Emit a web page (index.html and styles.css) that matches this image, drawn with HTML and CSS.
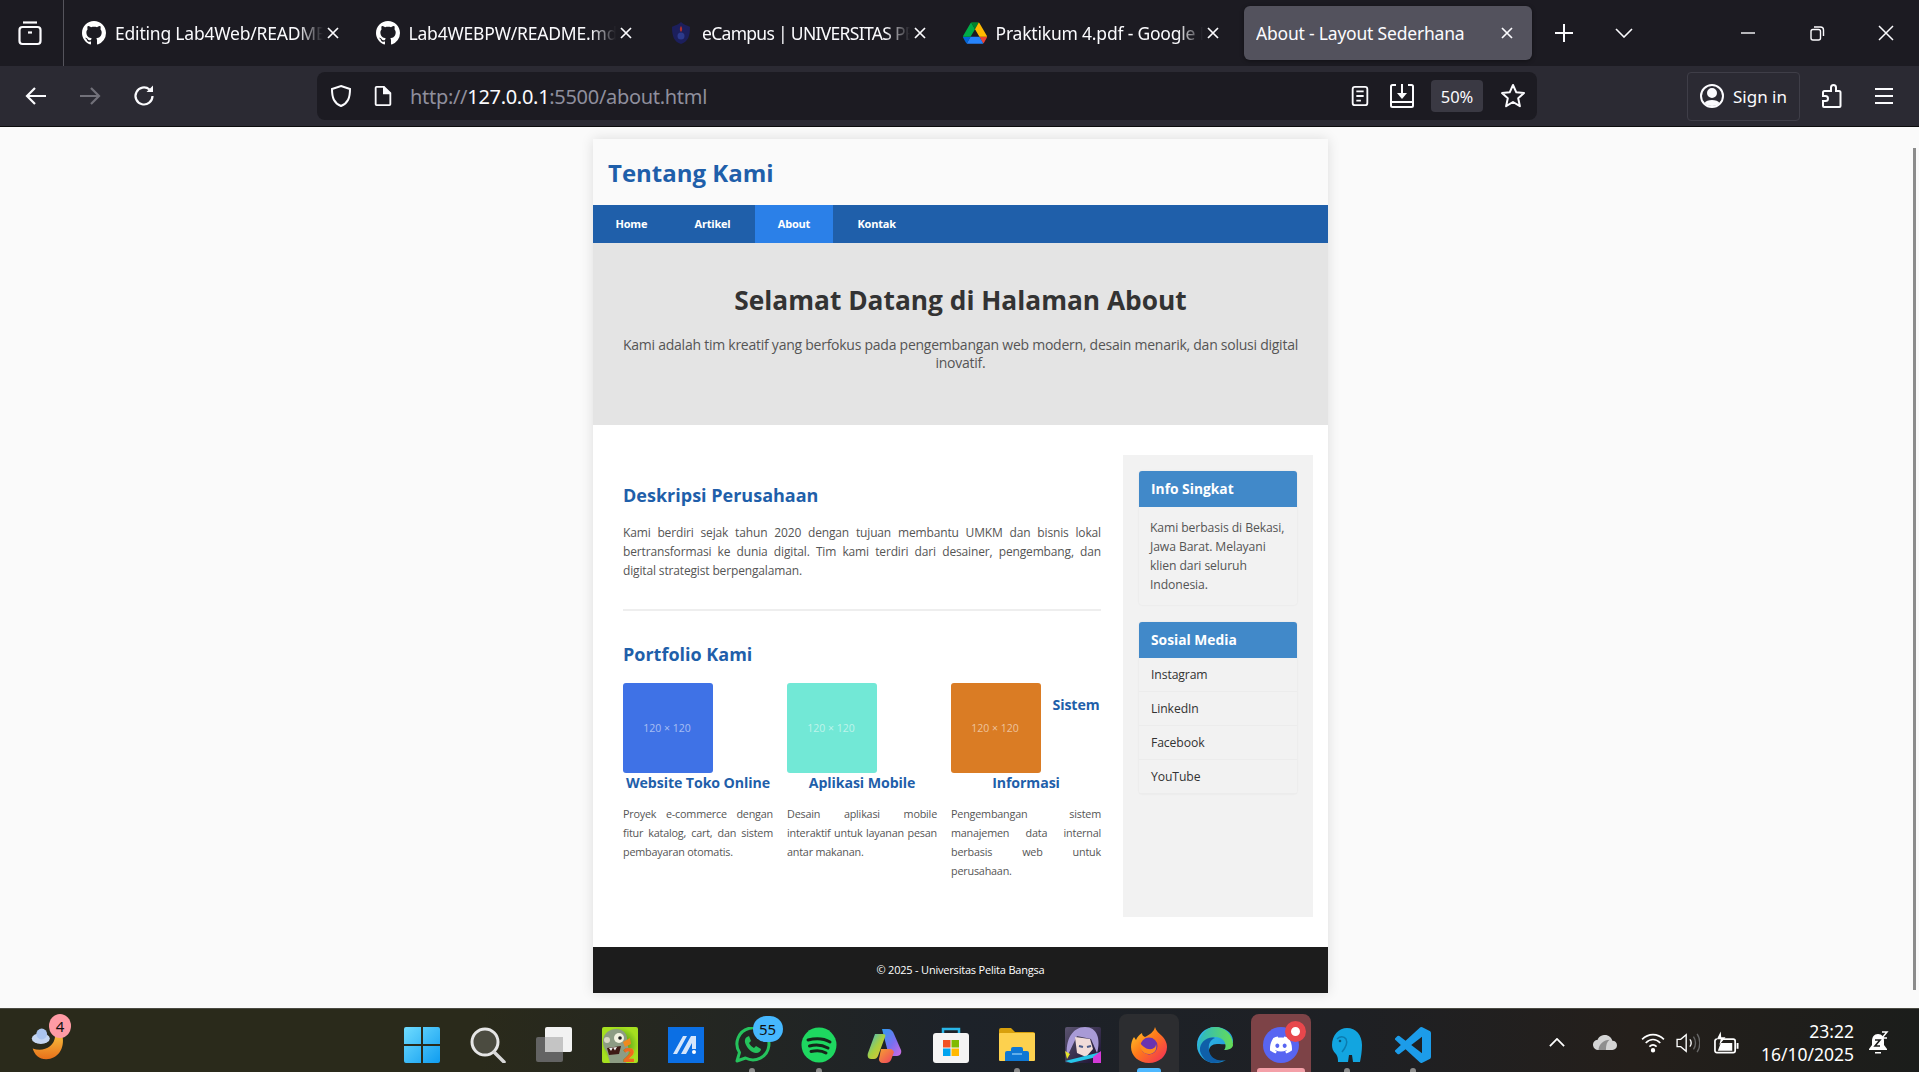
FILE: index.html
```html
<!DOCTYPE html>
<html>
    <head>
        <meta http-equiv="Content-Type" content="text/html;charset=UTF-8">
        <title>About - Layout Sederhana</title>
        <link rel="stylesheet" href="styles.css">
    </head>
    <body>
        <svg class="sprite" width="0" height="0">
            <symbol id="github" viewBox="0 0 16 16"><path fill="#fff" d="M8 0C3.58 0 0 3.58 0 8c0 3.54 2.29 6.53 5.47 7.59.4.07.55-.17.55-.38 0-.19-.01-.82-.01-1.49-2.01.37-2.53-.49-2.69-.94-.09-.23-.48-.94-.82-1.13-.28-.15-.68-.52-.01-.53.63-.01 1.08.58 1.23.82.72 1.21 1.87.87 2.33.66.07-.52.28-.87.51-1.07-1.78-.2-3.64-.89-3.64-3.95 0-.87.31-1.59.82-2.15-.08-.2-.36-1.02.08-2.12 0 0 .67-.21 2.2.82.64-.18 1.32-.27 2-.27.68 0 1.36.09 2 .27 1.53-1.04 2.2-.82 2.2-.82.44 1.1.16 1.92.08 2.12.51.56.82 1.27.82 2.15 0 3.07-1.87 3.75-3.65 3.95.29.25.54.73.54 1.48 0 1.07-.01 1.93-.01 2.2 0 .21.15.46.55.38A8.013 8.013 0 0016 8c0-4.42-3.58-8-8-8z"/></symbol>
            <symbol id="close" viewBox="0 0 14 14"><path d="M2 2l10 10M12 2L2 12" fill="none" stroke="#fbfbfe" stroke-width="1.7"/></symbol>
        </svg>

        <!-- browser tabs -->
        <div class="tabbar">
            <div class="tablist">
                <svg class="icon-26" viewBox="0 0 26 26" fill="none" stroke="#fbfbfe" stroke-width="2.2"><path d="M6 2.5h14"/><rect x="2.5" y="7" width="21" height="17" rx="3"/><path d="M11 12.5h4"/></svg>
            </div>
            <div class="tabs">
                <div class="tab">
                    <svg class="favicon"><use href="#github"/></svg>
                    <span class="tab-title">Editing Lab4Web/README.md</span>
                    <svg class="tab-close"><use href="#close"/></svg>
                </div>
                <div class="tab">
                    <svg class="favicon"><use href="#github"/></svg>
                    <span class="tab-title">Lab4WEBPW/README.md at main</span>
                    <svg class="tab-close"><use href="#close"/></svg>
                </div>
                <div class="tab">
                    <svg class="favicon" viewBox="0 0 22 24"><path d="M11 1c3 3 8 4 9 5 0 9-2 15-9 17C4 21 2 15 2 6c1-1 6-2 9-5z" fill="#1c1f5c"/><path d="M11 5c2 3 1 5 0 6-1-1-2-3 0-6z" fill="#b0302c"/><circle cx="11" cy="15" r="3.5" fill="#2c3a8c"/></svg>
                    <span class="tab-title tab-title-tight">eCampus | UNIVERSITAS PELITA BANGSA</span>
                    <svg class="tab-close"><use href="#close"/></svg>
                </div>
                <div class="tab">
                    <svg class="favicon" viewBox="0 0 87.3 78">
                        <path d="m6.6 66.85 3.85 6.65c.8 1.4 1.95 2.5 3.3 3.3l13.75-23.8h-27.5c0 1.55.4 3.1 1.2 4.5z" fill="#0066da"/>
                        <path d="m43.65 25-13.75-23.8c-1.35.8-2.5 1.9-3.3 3.3l-25.4 44a9.06 9.06 0 0 0 -1.2 4.5h27.5z" fill="#00ac47"/>
                        <path d="m73.55 76.8c1.35-.8 2.5-1.9 3.3-3.3l1.6-2.75 7.65-13.25c.8-1.4 1.2-2.95 1.2-4.5h-27.502l5.852 11.5z" fill="#ea4335"/>
                        <path d="m43.65 25 13.75-23.8c-1.35-.8-2.9-1.2-4.5-1.2h-18.5c-1.6 0-3.15.45-4.5 1.2z" fill="#00832d"/>
                        <path d="m59.8 53h-32.3l-13.75 23.8c1.35.8 2.9 1.2 4.5 1.2h50.8c1.6 0 3.15-.45 4.5-1.2z" fill="#2684fc"/>
                        <path d="m73.4 26.5-12.7-22c-.8-1.4-1.95-2.5-3.3-3.3l-13.75 23.8 16.15 28h27.45c0-1.55-.4-3.1-1.2-4.5z" fill="#ffba00"/>
                    </svg>
                    <span class="tab-title">Praktikum 4.pdf - Google Drive</span>
                    <svg class="tab-close"><use href="#close"/></svg>
                </div>
                <div class="tab tab-active">
                    <span class="tab-title">About - Layout Sederhana</span>
                    <svg class="tab-close"><use href="#close"/></svg>
                </div>
            </div>
            <svg class="new-tab" viewBox="0 0 20 20"><path d="M10 1v18M1 10h18" stroke="#fbfbfe" stroke-width="2"/></svg>
            <svg class="all-tabs" viewBox="0 0 18 10" fill="none"><path d="M1 1l8 8 8-8" stroke="#fbfbfe" stroke-width="1.6"/></svg>
            <div class="window-controls">
                <svg class="icon-16" viewBox="0 0 16 16"><path d="M1 8h14" stroke="#fbfbfe" stroke-width="1.4"/></svg>
                <svg class="icon-16" viewBox="0 0 16 16" fill="none" stroke="#fbfbfe" stroke-width="1.4"><rect x="2" y="4.5" width="9.5" height="10.5" rx="2"/><path d="M5 2h6.500a3 3 0 0 1 3 3v6"/></svg>
                <svg class="icon-16" viewBox="0 0 16 16"><path d="M1 1l14 14M15 1L1 15" stroke="#fbfbfe" stroke-width="1.5"/></svg>
            </div>
        </div>

        <!-- toolbar -->
        <div class="toolbar">
            <div class="nav-buttons">
                <svg class="icon-24" viewBox="0 0 24 24" fill="none" stroke="#fbfbfe" stroke-width="2.2"><path d="M22 12H3M11 4l-8 8 8 8"/></svg>
                <svg class="icon-24" viewBox="0 0 24 24" fill="none" stroke="#72717a" stroke-width="2.2"><path d="M2 12h19M13 4l8 8-8 8"/></svg>
                <svg class="icon-24" viewBox="0 0 24 24" fill="none" stroke="#fbfbfe" stroke-width="2.2"><path d="M20.500 12a8.500 8.500 0 1 1-3-6.500"/><path d="M21 1.500V8h-6.500" fill="#fbfbfe" stroke="none"/></svg>
            </div>
            <div class="urlbar">
                <svg class="icon-24" viewBox="0 0 24 24" fill="none" stroke="#fbfbfe" stroke-width="2"><path d="M12 2l9 3c0 9-2 14-9 17C5 19 3 14 3 5z"/></svg>
                <svg class="icon-22" viewBox="0 0 22 24" fill="none" stroke="#fbfbfe" stroke-width="2"><path d="M3 3a1 1 0 0 1 1-1h8l7 7v12a1 1 0 0 1-1 1H4a1 1 0 0 1-1-1z"/><path d="M12 2v7h7" fill="#fbfbfe"/></svg>
                <div class="url"><span class="url-dim">http://</span>127.0.0.1<span class="url-dim">:5500/about.html</span></div>
                <svg class="icon-22" viewBox="0 0 20 24" fill="none" stroke="#fbfbfe" stroke-width="2"><rect x="2" y="2" width="16" height="20" rx="2.500"/><path d="M6 7h8M6 12h8M6 17h5"/></svg>
                <svg class="icon-26" viewBox="0 0 26 26" fill="none" stroke="#fbfbfe" stroke-width="2"><path d="M7 2H3.500A1.500 1.500 0 0 0 2 3.500v19A1.500 1.500 0 0 0 3.500 24h19a1.500 1.500 0 0 0 1.500-1.500v-19A1.500 1.500 0 0 0 22.500 2H19"/><path d="M2 19h22"/><path d="M13 1v13"/><path d="M8 10h10l-5 6z" fill="#fbfbfe" stroke="none"/></svg>
                <div class="zoom-badge">50%</div>
                <svg class="icon-26" viewBox="0 0 26 26" fill="none" stroke="#fbfbfe" stroke-width="2"><path d="M13 2l3.300 7.300 7.700.8-5.800 5.200 1.700 7.900L13 19l-6.900 4.200 1.700-7.900L2 10.100l7.700-.8z" stroke-linejoin="round"/></svg>
            </div>
            <div class="signin">
                <svg class="icon-26" viewBox="0 0 26 26" fill="none" stroke="#fbfbfe" stroke-width="2"><circle cx="13" cy="13" r="11"/><circle cx="13" cy="10" r="4" fill="#fbfbfe"/><path d="M5.500 20c2-4 13-4 15 0-3 4-12 4-15 0z" fill="#fbfbfe" stroke="none"/></svg>
                <span>Sign in</span>
            </div>
            <svg class="icon-26 tool-ext" viewBox="0 0 26 26" fill="none" stroke="#fbfbfe" stroke-width="2"><path d="M13 8V4.500a2.500 2.500 0 0 1 5 0V8h3a1.500 1.500 0 0 1 1.500 1.500V23a1 1 0 0 1-1 1H6a1 1 0 0 1-1-1v-5h2.500a2.500 2.500 0 0 0 0-5H5V9.500A1.500 1.500 0 0 1 6.500 8z"/></svg>
            <svg class="icon-22 tool-menu" viewBox="0 0 22 22"><path d="M2 4h18M2 11h18M2 18h18" stroke="#fbfbfe" stroke-width="2"/></svg>
        </div>

        <!-- the page itself -->
        <div class="viewport">
            <div class="container">
                <header class="site-header"><h1>Tentang Kami</h1></header>
                <nav class="site-nav">
                    <a href="#">Home</a>
                    <a href="#">Artikel</a>
                    <a href="#" class="active">About</a>
                    <a href="#">Kontak</a>
                </nav>
                <section class="hero">
                    <h2>Selamat Datang di Halaman About</h2>
                    <p>Kami adalah tim kreatif yang berfokus pada pengembangan web modern, desain menarik, dan solusi digital inovatif.</p>
                </section>
                <main class="content">
                    <article class="article">
                        <h3>Deskripsi Perusahaan</h3>
                        <p class="lead">Kami berdiri sejak tahun 2020 dengan tujuan membantu UMKM dan bisnis lokal bertransformasi ke dunia digital. Tim kami terdiri dari desainer, pengembang, dan digital strategist berpengalaman.</p>
                        <hr>
                        <h3>Portfolio Kami</h3>
                        <div class="portfolio">
                            <div class="card">
                                <div class="thumb thumb-blue">120 × 120</div>
                                <h4>Website Toko Online</h4>
                                <p>Proyek e-commerce dengan fitur katalog, cart, dan sistem pembayaran otomatis.</p>
                            </div>
                            <div class="card">
                                <div class="thumb thumb-teal">120 × 120</div>
                                <h4>Aplikasi Mobile</h4>
                                <p>Desain aplikasi mobile interaktif untuk layanan pesan antar makanan.</p>
                            </div>
                            <div class="card">
                                <div class="thumb thumb-orange">120 × 120</div>
                                <h4>Sistem Informasi</h4>
                                <p>Pengembangan sistem manajemen data internal berbasis web untuk perusahaan.</p>
                            </div>
                        </div>
                    </article>
                    <aside class="sidebar">
                        <div class="widget">
                            <h5>Info Singkat</h5>
                            <p>Kami berbasis di Bekasi, Jawa Barat. Melayani klien dari seluruh Indonesia.</p>
                        </div>
                        <div class="widget">
                            <h5>Sosial Media</h5>
                            <ul>
                                <li>Instagram</li>
                                <li>LinkedIn</li>
                                <li>Facebook</li>
                                <li>YouTube</li>
                            </ul>
                        </div>
                    </aside>
                </main>
                <footer class="site-footer">© 2025 - Universitas Pelita Bangsa</footer>
            </div>
            <div class="scrollbar"></div>
        </div>

        <!-- windows taskbar -->
        <div class="taskbar">
            <div class="weather">
                <svg viewBox="0 0 40 40" class="weather-icon">
                    <defs><linearGradient id="moon" x1="0" y1="0" x2="0" y2="1"><stop offset="0" stop-color="#f6b93b"/><stop offset="1" stop-color="#e8701a"/></linearGradient></defs>
                    <path d="M36 12c3 14-5 26-18 26C10 38 5 33 3 26c10 4 24 0 25-14z" fill="url(#moon)"/>
                    <ellipse cx="12" cy="15" rx="10" ry="6" fill="#c5d6f2"/>
                    <circle cx="13" cy="10" r="6" fill="#aac4ee"/>
                </svg>
                <span class="badge badge-pink">4</span>
            </div>
            <div class="task-icons">
                <div class="task">
                    <svg viewBox="0 0 36 36"><defs><linearGradient id="win" x1="0" y1="0" x2="1" y2="1"><stop offset="0" stop-color="#6fdcff"/><stop offset="1" stop-color="#0f9cf0"/></linearGradient></defs><path fill="url(#win)" d="M0 2a2 2 0 0 1 2-2h15v17H0zM19 0h15a2 2 0 0 1 2 2v15H19zM0 19h17v17H2a2 2 0 0 1-2-2zM19 19h17v15a2 2 0 0 1-2 2H19z"/></svg>
                </div>
                <div class="task">
                    <svg viewBox="0 0 36 36"><circle cx="15" cy="15" r="13" fill="#4b4b40" stroke="#e6e6e6" stroke-width="3"/><path d="M24 25l10 10" stroke="#d8d8d8" stroke-width="3.500" stroke-linecap="round"/></svg>
                </div>
                <div class="task">
                    <svg viewBox="0 0 36 36"><rect x="0" y="10" width="27" height="25" rx="2" fill="#636363"/><rect x="9" y="0" width="27" height="25" rx="2" fill="#f2f2f2"/><rect x="9" y="10" width="18" height="15" fill="#c4c4c4"/></svg>
                </div>
                <div class="task">
                    <svg viewBox="0 0 36 36"><defs><radialGradient id="pvz"><stop offset="0" stop-color="#2f7d1a"/><stop offset="1" stop-color="#a5e01f"/></radialGradient></defs><rect width="36" height="36" rx="2" fill="url(#pvz)"/><path d="M1 14C1 6 8 2 14 2c8 0 12 6 11 12l2 10-3 12H8L5 25C2 22 1 18 1 14z" fill="#8d9c84"/><circle cx="17" cy="11" r="5" fill="#f2f2e0"/><circle cx="18" cy="11" r="1.800" fill="#222"/><circle cx="5" cy="13" r="3" fill="#d8d8c4"/><path d="M5 21l14-2-2 8-10 1z" fill="#3e1a14"/><path d="M7 21l2 3 2-3.500 2 3 2-3.500" fill="#eee"/><path d="M21 15l7-4 1 6-6 3z" fill="#ef8a1e"/><text x="21" y="35" class="pvz-two">2</text></svg>
                </div>
                <div class="task">
                    <svg viewBox="0 0 36 36"><rect width="36" height="36" fill="#0b6fe4"/><path d="M5 27L15 9h4L9 27zM13 27L23 9h5v13h-4v-6l-6 11z" fill="#d5e6fb"/><circle cx="26" cy="25" r="2" fill="#fff"/></svg>
                </div>
                <div class="task task-open">
                    <svg viewBox="0 0 36 36"><path d="M2 34l2.500-8.500A16 16 0 1 1 10.500 31z" fill="none" stroke="#25c25c" stroke-width="3" stroke-linejoin="round"/><path d="M12 10c-2 1-3 4-1 8s6 8 10 8c3 0 5-2 5-4l-5-3-2 2c-2-1-4-3-5-5l2-2-2-5z" fill="#25c25c"/></svg>
                    <span class="badge badge-blue">55</span>
                </div>
                <div class="task task-open">
                    <svg viewBox="0 0 36 36"><circle cx="18" cy="18" r="17.500" fill="#1ed760"/><path d="M7 13c8-2 16-1.500 22 2M8.500 19c7-2 13-1 18.500 2M10 24.500c6-1.500 11-1 15 1.500" fill="none" stroke="#16251a" stroke-width="3" stroke-linecap="round"/></svg>
                </div>
                <div class="task">
                    <svg viewBox="0 0 36 36"><defs><linearGradient id="cop1" x1="0" y1="0" x2="1" y2="1"><stop offset="0" stop-color="#2e9bf0"/><stop offset=".55" stop-color="#7b6ff0"/><stop offset="1" stop-color="#d46be0"/></linearGradient><linearGradient id="cop2" x1="0" y1="0" x2="1" y2="1"><stop offset="0" stop-color="#38b6d8"/><stop offset=".5" stop-color="#a8d040"/><stop offset="1" stop-color="#f0c030"/></linearGradient><linearGradient id="cop3" x1="0" y1="0" x2="1" y2="1"><stop offset="0" stop-color="#f5a030"/><stop offset="1" stop-color="#ee3f62"/></linearGradient></defs><path d="M15 2h6c3 0 5 2 6 5l7 16c1 3-1 6-4 6h-8z" fill="url(#cop1)"/><path d="M8 7h8c2 0 3 1 2 3l-7 19c-1 2-2 3-4 3H4c-3 0-4-3-3-6z" fill="url(#cop2)"/><path d="M14 22h9c2 0 3 1 4 3l-3 8c-1 2-3 3-5 3h-3c-3 0-4-2-4-4z" fill="url(#cop3)"/></svg>
                </div>
                <div class="task">
                    <svg viewBox="0 0 36 36"><path d="M10 9V2h16v7" fill="none" stroke="#29b6e8" stroke-width="2.500"/><rect y="6" width="36" height="30" rx="3" fill="#f4f4f4"/><rect x="10" y="13" width="7.500" height="7.500" fill="#f25022"/><rect x="18.500" y="13" width="7.500" height="7.500" fill="#7fba00"/><rect x="10" y="21.500" width="7.500" height="7.500" fill="#00a4ef"/><rect x="18.500" y="21.500" width="7.500" height="7.500" fill="#ffb900"/></svg>
                </div>
                <div class="task task-open">
                    <svg viewBox="0 0 36 36"><path d="M0 3a2 2 0 0 1 2-2h10l4 4h18a2 2 0 0 1 2 2v4H0z" fill="#d8a00c"/><rect y="6" width="36" height="28" rx="1" fill="#fdd14e"/><path d="M6 26a2 2 0 0 1 2-2h4v-2a2 2 0 0 1 2-2h8a2 2 0 0 1 2 2v2h4a2 2 0 0 1 2 2v8H6z" fill="#0f78d4" transform="translate(0 0)"/><path d="M13 27h10" stroke="#7cc0f2" stroke-width="1.500"/></svg>
                </div>
                <div class="task">
                    <svg viewBox="0 0 36 36"><defs><linearGradient id="anime" x1="0" y1="0" x2="1" y2="1"><stop offset="0" stop-color="#5b5470"/><stop offset="1" stop-color="#1a1030"/></linearGradient></defs><rect width="36" height="36" rx="2" fill="url(#anime)"/><path d="M2 30C0 12 8 0 20 0s16 12 12 26l-6-14-14-3z" fill="#a89ad6"/><path d="M10 10l15 2 3 10-7 8-9-4z" fill="#f1dcd9"/><path d="M14 19l4 1M22 20l4-1" stroke="#4a5b8a" stroke-width="2"/><path d="M0 34l36-9v4L6 36z" fill="#26c6e8"/><path d="M28 30l8-6v12h-8z" fill="#d43ad8"/><path d="M0 24l5 3-3 5z" fill="#e6e62a"/></svg>
                </div>
                <div class="task task-firefox">
                    <svg viewBox="0 0 36 36"><defs><linearGradient id="ffox" x1="0" y1="0" x2="1" y2="1"><stop offset="0" stop-color="#ffd02a"/><stop offset=".45" stop-color="#ff7a1a"/><stop offset="1" stop-color="#f0285c"/></linearGradient></defs><path d="M24 0c1 4 4 6 7 9 4 4 5 8 5 11 0 9-8 16-18 16S0 29 0 20c0-4 1-7 3-10l2 3c1-3 3-5 6-7 0 2 1 3 3 4 4-2 9-5 10-10z" fill="url(#ffox)"/><circle cx="18" cy="19" r="8.500" fill="#6a33b0"/><path d="M8 15c3 3 6 8 13 7 3-1 4-3 4-5 1 4 0 9-6 10-6 1-11-5-11-12z" fill="#ff8a1f"/></svg>
                </div>
                <div class="task">
                    <svg viewBox="0 0 36 36"><defs><linearGradient id="edge1" x1="0" y1="0" x2="1" y2="1"><stop offset="0" stop-color="#35c1f1"/><stop offset="1" stop-color="#1b8fcb"/></linearGradient><linearGradient id="edge2" x1="0" y1="0" x2="1" y2="0"><stop offset="0" stop-color="#2bb6c8"/><stop offset="1" stop-color="#66dd55"/></linearGradient></defs><path d="M18 0C8 0 0 8 0 18c0 10 8 18 18 18 4 0 8-1 11-3-9 3-17-2-17-9 0-4 3-7 8-7 6 0 15 1 16-1 1-9-7-16-18-16z" fill="url(#edge1)"/><path d="M18 0c10 0 18 8 18 18 0 3-4 5-9 5 2-2 2-6 0-9-3-4-9-5-14-3C6 14 2 19 1 24 0 13 7 0 18 0z" fill="url(#edge2)"/><path d="M3 24c-1-9 8-15 15-13-5 2-7 6-6 13 1 6 8 11 16 9-4 2-8 3-11 3C10 36 5 31 3 24z" fill="#0f5fa8"/></svg>
                </div>
                <div class="task task-discord">
                    <svg viewBox="0 0 36 36"><circle cx="18" cy="18" r="18" fill="#5865f2"/><svg x="7" y="7" width="22" height="22" viewBox="0 0 24 24"><path fill="#fff" d="M20.317 4.3698a19.7913 19.7913 0 00-4.8851-1.5152.0741.0741 0 00-.0785.0371c-.211.3753-.4447.8648-.6083 1.2495-1.8447-.2762-3.68-.2762-5.4868 0-.1636-.3933-.4058-.8742-.6177-1.2495a.077.077 0 00-.0785-.037 19.7363 19.7363 0 00-4.8852 1.515.0699.0699 0 00-.0321.0277C.5334 9.0458-.319 13.5799.0992 18.0578a.0824.0824 0 00.0312.0561c2.0528 1.5076 4.0413 2.4228 5.9929 3.0294a.0777.0777 0 00.0842-.0276c.4616-.6304.8731-1.2952 1.226-1.9942a.076.076 0 00-.0416-.1057c-.6528-.2476-1.2743-.5495-1.8722-.8923a.077.077 0 01-.0076-.1277c.1258-.0943.2517-.1923.3718-.2914a.0743.0743 0 01.0776-.0105c3.9278 1.7933 8.18 1.7933 12.0614 0a.0739.0739 0 01.0785.0095c.1202.099.246.1981.3728.2924a.077.077 0 01-.0066.1276 12.2986 12.2986 0 01-1.873.8914.0766.0766 0 00-.0407.1067c.3604.698.7719 1.3628 1.225 1.9932a.076.076 0 00.0842.0286c1.961-.6067 3.9495-1.5219 6.0023-3.0294a.077.077 0 00.0313-.0552c.5004-5.177-.8382-9.6739-3.5485-13.6604a.061.061 0 00-.0312-.0286zM8.02 15.3312c-1.1825 0-2.1569-1.0857-2.1569-2.419 0-1.3332.9555-2.4189 2.157-2.4189 1.2108 0 2.1757 1.0952 2.1568 2.419 0 1.3332-.9555 2.4189-2.1569 2.4189zm7.9748 0c-1.1825 0-2.1569-1.0857-2.1569-2.419 0-1.3332.9554-2.4189 2.1569-2.4189 1.2108 0 2.1757 1.0952 2.1568 2.419 0 1.3332-.946 2.4189-2.1568 2.4189Z"/></svg></svg>
                    <span class="discord-dot"></span>
                </div>
                <div class="task task-open">
                    <svg viewBox="0 0 36 36"><path d="M3 18C3 8 10 1 18 1c9 0 15 7 15 17 0 6-1 12-2 17h-7l-1-7h-3l-1 7H9c0-5-1-7-3-9-2-2-3-5-3-8z" fill="#12a5e0"/><path d="M8 12c3-3 7-3 9 0 2 4 0 8-4 13" fill="none" stroke="#0b7cb0" stroke-width="1.500"/><circle cx="11" cy="14" r="1.300" fill="#0a5478"/></svg>
                </div>
                <div class="task task-open">
                    <svg viewBox="0 0 24 24"><path fill="#1c9ce9" d="M23.15 2.587L18.21.21a1.494 1.494 0 0 0-1.705.29l-9.46 8.63-4.12-3.128a.999.999 0 0 0-1.276.057L.327 7.261A1 1 0 0 0 .326 8.74L3.899 12 .326 15.26a1 1 0 0 0 .001 1.479L1.65 17.94a.999.999 0 0 0 1.276.057l4.12-3.128 9.46 8.63a1.492 1.492 0 0 0 1.704.29l4.942-2.377A1.5 1.5 0 0 0 24 20.06V3.939a1.5 1.5 0 0 0-.85-1.352zm-5.146 14.861L10.826 12l7.178-5.448v10.896z"/></svg>
                </div>
            </div>
            <div class="tray">
                <svg class="tray-chevron" viewBox="0 0 18 10" fill="none"><path d="M1 9l8-8 8 8" stroke="#fff" stroke-width="2"/></svg>
                <svg class="tray-cloud" viewBox="0 0 26 16"><path d="M6 16a5.500 5.500 0 0 1-1-11C7 1 10 0 13 0c4 0 7 3 8 6 3 0 5 2 5 5s-2 5-5 5z" fill="#d4d4d4"/><path d="M6 16c0-6 6-11 12-11-3 2-4 6-4 11z" fill="#8f8f8f"/></svg>
                <svg class="tray-wifi" viewBox="0 0 26 22" fill="none" stroke="#fff" stroke-width="1.800"><path d="M1 7c7-7 17-7 24 0M5 11c5-5 11-5 16 0M9 15c2.500-2.500 5.500-2.500 8 0"/><circle cx="13" cy="19" r="1.500" fill="#fff"/></svg>
                <svg class="tray-sound" viewBox="0 0 26 22" fill="none" stroke="#fff" stroke-width="1.500"><path d="M1 7h4l6-5v18l-6-5H1z"/><path d="M15 7c2 2 2 6 0 8"/><path d="M19 4c3 4 3 10 0 14M23 1c4 6 4 14 0 20" stroke="#666"/></svg>
                <svg class="tray-battery" viewBox="0 0 26 24" fill="none" stroke="#fff" stroke-width="1.800"><path d="M9 8h11a2 2 0 0 1 2 2v10a2 2 0 0 1-2 2H3a2 2 0 0 1-2-2V10a2 2 0 0 1 2-2"/><path d="M24.500 12v6" stroke-width="2"/><path d="M4 20l3-8h12v8z" fill="#fff" stroke="none"/><path d="M7 0L3 8h4l-1.500 6L12 6H7.500z" fill="#fff" stroke="none"/></svg>
                <div class="clock">
                    <div>23:22</div>
                    <div>16/10/2025</div>
                </div>
                <svg class="tray-bell" viewBox="0 0 22 24"><path d="M11 3c-4 0-6 3-6 7v4l-3 4v1h18v-1l-3-4v-4c0-4-2-7-6-7z" fill="#fff"/><path d="M8 21h6v1.500H8z" fill="#fff"/><path d="M8 9h5l-5 6h5" fill="none" stroke="#1c1c1c" stroke-width="1.600"/><path d="M15 1h5l-5 6h5" fill="none" stroke="#fff" stroke-width="1.500"/></svg>
            </div>
        </div>
    </body>
</html>
```

FILE: styles.css
```css
* {
    box-sizing: border-box;
}
html, body {
    margin: 0;
    height: 100%;
}
body {
    background: #1c1b22;
    display: flex;
    flex-direction: column;
    font-family: "Noto Sans", "Open Sans", sans-serif;
    height: 1072px;
    overflow: hidden;
}
.sprite {
    position: absolute;
}
.icon-16 {width: 16px; height: 16px;}
.icon-22 {width: 22px; height: 22px;}
.icon-24 {width: 24px; height: 24px;}
.icon-26 {width: 26px; height: 26px;}

/* tabs */
.tabbar {
    align-items: center;
    background: #1c1b22;
    color: #fbfbfe;
    display: flex;
    height: 66px;
    flex: none;
}
.tablist {
    align-items: center;
    align-self: stretch;
    border-right: 1px solid #55545c;
    display: flex;
    justify-content: center;
    width: 64px;
    padding-right: 4px;
}
.tabs {
    display: flex;
    gap: 6px;
    margin-left: 6px;
}
.tab {
    align-items: center;
    border-radius: 6px;
    display: flex;
    font-size: 17.5px;
    height: 54px;
    padding: 0 18px 0 12px;
    width: 287.500px;
}
.tab-active {
    background: #53525d;
    box-shadow: 0 1px 4px rgba(0,0,0,.4);
}
.favicon {
    flex: none;
    height: 24px;
    margin-right: 9px;
    width: 24px;
}
.tab-title {
    flex: 1;
    letter-spacing: -.2px;
    overflow: hidden;
    white-space: nowrap;
    -webkit-mask-image: linear-gradient(to right, #000 88%, transparent 100%);
    mask-image: linear-gradient(to right, #000 88%, transparent 100%);
}
.tab-title-tight {
    letter-spacing: -.7px;
}
.tab-active .tab-title {
    -webkit-mask-image: none;
    mask-image: none;
}
.tab-close {
    flex: none;
    height: 14px;
    margin-left: 3px;
    width: 14px;
}
.new-tab {
    height: 20px;
    margin-left: 22px;
    width: 20px;
}
.all-tabs {
    height: 10px;
    margin-left: 41px;
    width: 18px;
}
.window-controls {
    align-items: center;
    display: flex;
    gap: 53px;
    margin-left: auto;
    padding-right: 25px;
}

/* toolbar */
.toolbar {
    align-items: center;
    background: #2b2a33;
    border-bottom: 1px solid #0c0c0d;
    color: #fbfbfe;
    display: flex;
    flex: none;
    height: 61px;
}
.nav-buttons {
    align-items: center;
    display: flex;
    gap: 30px;
    padding-left: 24px;
    width: 317px;
}
.urlbar {
    align-items: center;
    background: #1c1b22;
    border-radius: 8px;
    display: flex;
    height: 48px;
    padding: 0 11px 0 12px;
    width: 1220px;
}
.urlbar > .icon-22:nth-child(2) {
    margin-left: 19px;
}
.url {
    flex: 1;
    font-size: 20px;
    letter-spacing: -.3px;
    margin-left: 16px;
}
.url-dim {
    color: #8f8f9d;
}
.zoom-badge {
    align-items: center;
    background: #3a3943;
    border-radius: 4px;
    display: flex;
    font-size: 16.500px;
    height: 32px;
    justify-content: center;
    margin: 0 17px 0 16px;
    width: 52px;
}
.urlbar > .icon-22:nth-child(4) {
    margin-right: 18px;
}
.signin {
    align-items: center;
    border: 1px solid #3f3e48;
    border-radius: 4px;
    display: flex;
    font-size: 17px;
    gap: 8px;
    height: 49px;
    margin-left: 150px;
    padding-left: 11px;
    width: 113px;
}
.tool-ext {
    margin-left: 18px;
}
.tool-menu {
    margin-left: 29px;
}

/* page */
.viewport {
    background: #fafafa;
    flex: none;
    font-family: "Open Sans", sans-serif;
    height: 881px;
    padding: 12px 0 0 2px;
    position: relative;
}
.container {
    background: #fff;
    box-shadow: 0 0 12px rgba(0,0,0,.12);
    margin: 0 auto;
    width: 735px;
}
.site-header {
    background: #fafafa;
    height: 66px;
    padding: 0 15px;
    display: flex;
    align-items: center;
}
h1 {
    color: #1f5faa;
    font-size: 24px;
    margin: 0;
}
.site-nav {
    background: #1f5faa;
    display: flex;
    gap: 2.300px;
    height: 38px;
}
.site-nav a {
    align-items: center;
    color: #fff;
    display: flex;
    font-size: 11px;
    font-weight: 700;
    letter-spacing: -.2px;
    padding: 0 22.500px 2px;
    text-decoration: none;
}
.site-nav a.active {
    background: #2b80e8;
}
.hero {
    background: #e4e4e4;
    color: #333;
    height: 182px;
    padding: 39px 22px 0;
    text-align: center;
}
.hero h2 {
    font-size: 26.300px;
    line-height: 36px;
    margin: 0 0 18px;
}
.hero p {
    color: #555;
    font-size: 14px;
    letter-spacing: -.25px;
    line-height: 18px;
    margin: 0;
}
.content {
    display: flex;
    gap: 22px;
    height: 522px;
    padding: 30px 15px 30px 30px;
}
.article {
    flex: 1;
    padding-top: 25px;
}
.article h3 {
    color: #1f5faa;
    font-size: 18px;
    line-height: 30px;
    margin: 0 0 12px;
}
.lead {
    color: #555;
    font-size: 12px;
    letter-spacing: -.15px;
    line-height: 19px;
    margin: 13px 0 0;
    text-align: justify;
}
hr {
    background: #eee;
    border: 0;
    height: 2px;
    margin: 29px 0 28px;
}
.portfolio {
    display: flex;
    gap: 14px;
    margin-top: 14px;
}
.card {
    display: flow-root;
    width: 150px;
}
.thumb {
    align-items: center;
    border-radius: 3px;
    color: rgba(255,255,255,.55);
    display: flex;
    float: left;
    font-size: 10.500px;
    height: 90px;
    justify-content: center;
    margin-right: 10px;
    padding-right: 2px;
    width: 90px;
}
.thumb-blue {background: #3f72e6;}
.thumb-teal {background: #72e8d6;}
.thumb-orange {background: #da7c24;}
.card h4 {
    color: #1f5faa;
    font-size: 14.200px;
    letter-spacing: -.1px;
    line-height: 20px;
    margin: 12px 0 11px;
    text-align: center;
}
.card p {
    clear: both;
    color: #555;
    font-size: 10.800px;
    letter-spacing: -.2px;
    line-height: 19px;
    margin: 0;
    text-align: justify;
}
.sidebar {
    background: #f2f2f2;
    padding: 16px;
    width: 190px;
}
.widget {
    border-radius: 3px;
    box-shadow: 0 0 2px rgba(0,0,0,.08);
    margin-bottom: 17px;
}
.widget h5 {
    background: #4189c9;
    border-radius: 3px 3px 0 0;
    color: #fff;
    font-size: 13.800px;
    line-height: 36px;
    margin: 0;
    padding: 0 12px;
}
.widget p {
    color: #555;
    font-size: 12.200px;
    letter-spacing: -.1px;
    line-height: 19px;
    margin: 0;
    padding: 11px 6px 11px 11px;
}
.widget ul {
    list-style: none;
    margin: 0;
    padding: 0;
}
.widget li {
    border-bottom: 1px solid #ececec;
    color: #333;
    font-size: 12.200px;
    letter-spacing: -.1px;
    line-height: 33px;
    padding: 0 12px;
    height: 34px;
}
.site-footer {
    align-items: center;
    background: #1c1c1c;
    color: #fff;
    display: flex;
    font-size: 11px;
    height: 46px;
    justify-content: center;
    letter-spacing: -.2px;
    padding-bottom: 2px;
}
.scrollbar {
    background: #8c8c8c;
    height: 842px;
    position: absolute;
    right: 3px;
    top: 21px;
    width: 3px;
}

/* taskbar */
.taskbar {
    align-items: center;
    background: linear-gradient(to right, #2a2a1b 0%, #2a2a1b 25%, #1d2229 50%, #1e2024 70%, #241f1b 85%, #1b1d1b 100%);
    border-top: 1px solid #4a4a42;
    display: flex;
    flex: none;
    font-family: "Noto Sans", "Open Sans", sans-serif;
    height: 64px;
    position: relative;
}
.weather {
    height: 40px;
    margin-left: 30px;
    margin-top: 4px;
    position: relative;
    width: 40px;
}
.weather-icon {
    height: 36px;
    margin-top: 2px;
    width: 36px;
}
.badge {
    align-items: center;
    border-radius: 50%;
    color: #111;
    display: flex;
    justify-content: center;
    position: absolute;
}
.badge-pink {
    background: #ff9ba5;
    font-size: 15px;
    height: 24px;
    right: -1px;
    top: -9px;
    width: 22px;
}
.badge-blue {
    background: #46b8ff;
    border-radius: 13px;
    font-size: 15px;
    height: 26px;
    right: 3px;
    top: 7px;
    width: 30px;
}
.task-icons {
    display: flex;
    margin-left: 319px;
}
.task {
    align-items: center;
    display: flex;
    height: 63px;
    justify-content: center;
    padding-top: 8px;
    position: relative;
    width: 66.100px;
}
.task > svg {
    height: 36px;
    width: 36px;
}
.task-open::after, .task-firefox::after, .task-discord::after {
    background: #8c8c8c;
    border-radius: 3px 3px 0 0;
    bottom: 0;
    content: "";
    height: 4px;
    left: 30px;
    position: absolute;
    width: 6px;
}
.task-firefox, .task-discord {
    border-radius: 8px 8px 0 0;
    height: 58px;
    margin: 5px 3.050px 0;
    padding-top: 3px;
    width: 60px;
}
.task-firefox {
    background: #2c2d30;
}
.task-discord {
    background: #7d4347;
}
.task-firefox::after {
    background: #4db8ff;
    left: 18px;
    width: 24px;
}
.task-discord::after {
    background: #f4a0a8;
    left: 6px;
    width: 48px;
}
.discord-dot {
    background: #fff;
    border: 6px solid #e8474c;
    border-radius: 50%;
    height: 21px;
    position: absolute;
    right: 5px;
    top: 7px;
    width: 21px;
}
.pvz-two {
    fill: #ef6a1e;
    font-family: "Open Sans", sans-serif;
    font-size: 20px;
    font-weight: 800;
}
.tray {
    align-items: center;
    color: #fff;
    display: flex;
    margin-left: auto;
    padding: 4px 30px 0 0;
}
.tray-chevron {height: 9px; width: 16px;}
.tray-cloud {height: 15px; margin-left: 28px; width: 24px;}
.tray-wifi {height: 20px; margin-left: 24px; width: 24px;}
.tray-sound {height: 20px; margin-left: 11px; width: 24px;}
.tray-battery {height: 24px; margin-left: 14px; width: 25px;}
.clock {
    font-size: 17.500px;
    line-height: 23px;
    margin-left: 22px;
    text-align: right;
}
.tray-bell {
    height: 24px;
    margin-left: 13px;
    width: 22px;
}
```
